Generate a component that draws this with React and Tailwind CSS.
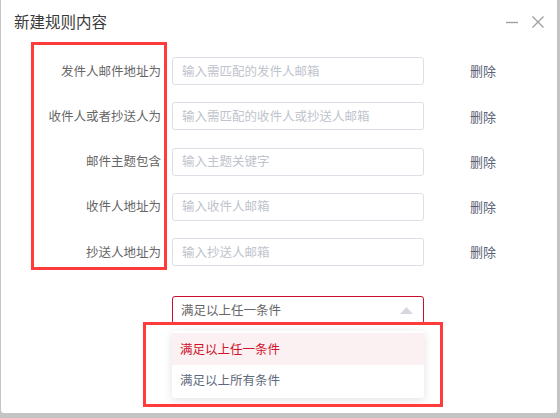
import React from 'react'

const rules = [
  { label: '发件人邮件地址为', placeholder: '输入需匹配的发件人邮箱' },
  { label: '收件人或者抄送人为', placeholder: '输入需匹配的收件人或抄送人邮箱' },
  { label: '邮件主题包含', placeholder: '输入主题关键字' },
  { label: '收件人地址为', placeholder: '输入收件人邮箱' },
  { label: '抄送人地址为', placeholder: '输入抄送人邮箱' },
]

function App() {
  return (
    <div
      className="w-[560px] h-[418px] bg-[#c4c4c4] relative overflow-hidden"
      style={{ fontFamily: '"Noto Sans CJK SC", "Noto Sans", sans-serif' }}
    >
      <div className="ml-[1px] w-[556px] h-[413px] bg-white rounded-b-[3px] flex flex-col">
        {/* header */}
        <div className="h-[44px] flex items-center justify-between pl-[13px] pr-[13px]">
          <span className="text-[15.5px] text-[#3a3a3a] leading-none">新建规则内容</span>
          <div className="flex items-center gap-[14px] text-[#a0a0a0]">
            <svg width="12" height="12" viewBox="0 0 12 12">
              <path d="M0 6.5h12" stroke="currentColor" strokeWidth="1.4" />
            </svg>
            <svg width="12" height="12" viewBox="0 0 12 12">
              <path d="M0.5 0.5l11 11M11.5 0.5l-11 11" stroke="currentColor" strokeWidth="1.4" />
            </svg>
          </div>
        </div>

        {/* rule rows */}
        <div className="mt-[13px] flex flex-col gap-[17.25px]">
          {rules.map((r) => (
            <div key={r.label} className="flex items-center h-[28px]">
              <div className="w-[160px] text-right text-[12.5px] text-[#666]">{r.label}</div>
              <div className="ml-[11px] w-[252px] h-[28px] border border-[#dcdfe6] rounded-[3px] flex items-center pl-[9px] text-[12.5px] text-[#c0c4cc]">
                {r.placeholder}
              </div>
              <button className="ml-[46px] text-[13px] text-[#5a6275]">删除</button>
            </div>
          ))}
        </div>

        {/* match select */}
        <div className="relative mt-[30px] ml-[171px] w-[252px]">
          <div className="h-[28px] border border-[#c8102e] rounded-[3px] flex items-center justify-between pl-[8px] pr-[10px]">
            <span className="text-[12.5px] text-[#666]">满足以上任一条件</span>
            <svg width="13" height="7" viewBox="0 0 13 7">
              <path d="M6.5 0L13 7H0z" fill="#d5d8de" />
            </svg>
          </div>
          <div className="absolute left-0 top-[35px] w-[252px] bg-white rounded-[3px] shadow-[0_2px_10px_rgba(0,0,0,0.12)] z-10 py-[2px]">
            <div className="h-[32px] flex items-center pl-[8px] bg-[#fbf0f2] text-[12.5px] text-[#d0112b]">满足以上任一条件</div>
            <div className="h-[31px] flex items-center pl-[8px] text-[12.5px] text-[#606a7c]">满足以上所有条件</div>
          </div>
        </div>

        {/* footer buttons, hidden under the dropdown */}
        <div className="mt-[44px] ml-[205px] flex gap-[13px]">
          <div className="w-[53px] h-[30px] border border-[#d0d0d0] rounded-[3px] bg-white" />
          <div className="w-[55px] h-[30px] rounded-[3px] bg-[#c0001d]" />
        </div>
      </div>

      {/* annotation boxes */}
      <div className="absolute left-[31px] top-[42px] w-[136px] h-[228px] border-[3px] border-[#ff3b3b] pointer-events-none" />
      <div className="absolute left-[143px] top-[322px] w-[300px] h-[85px] border-[3px] border-[#ff3b3b] pointer-events-none z-20" />
    </div>
  )
}

export default App
